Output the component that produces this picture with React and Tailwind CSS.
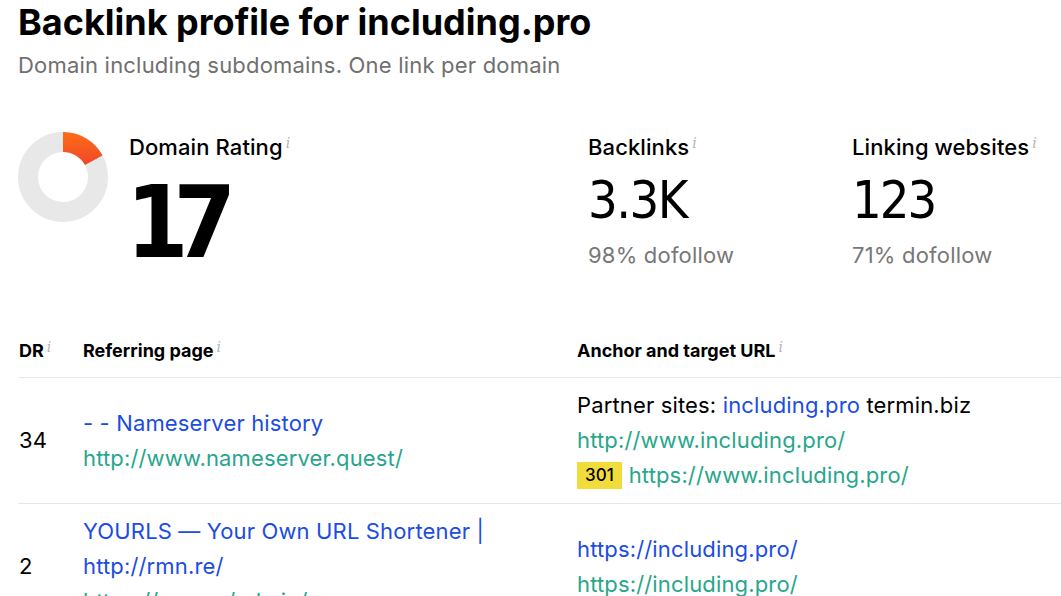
import React from "react";

function Info() {
  return (
    <span className="ml-[3px] text-[14px] italic font-normal text-[#b5b5b5] align-top relative -top-[4px]" style={{ fontFamily: "'DejaVu Serif', serif" }}>
      i
    </span>
  );
}

function Donut() {
  const r = 35;
  const c = 2 * Math.PI * r;
  const pct = 0.17;
  return (
    <svg width="90" height="90" viewBox="0 0 90 90" className="shrink-0">
      <defs>
        <linearGradient id="drg" gradientUnits="userSpaceOnUse" x1="45" y1="0" x2="86" y2="0">
          <stop offset="0%" stopColor="#ef3535" />
          <stop offset="100%" stopColor="#fb6a17" />
        </linearGradient>
      </defs>
      <circle cx="45" cy="45" r={r} fill="none" stroke="#e8e8e8" strokeWidth="20" />
      <circle
        cx="45"
        cy="45"
        r={r}
        fill="none"
        stroke="url(#drg)"
        strokeWidth="20"
        strokeDasharray={`${c * pct} ${c}`}
        transform="rotate(-90 45 45)"
      />
    </svg>
  );
}

export default function App() {
  return (
    <div className="bg-white w-[1061px] h-[596px] overflow-hidden text-black" style={{ fontFamily: "Inter, 'Noto Sans', sans-serif" }}>
      <div className="pl-[18px]">
        <h1 className="text-[36px] leading-[44px] font-bold">Backlink profile for including.pro</h1>
        <p className="mt-[7px] text-[22px] leading-[28px] text-[#707070] tracking-[0.2px]">Domain including subdomains. One link per domain</p>

        <div className="mt-[53px] flex items-start">
          <div className="flex w-[570px]">
            <Donut />
            <div className="ml-[21px] mt-[2px]">
              <div className="text-[22px] leading-[26px] font-medium tracking-[0.1px]">
                Domain Rating<Info />
              </div>
              <div className="mt-[13px] -ml-[3px] text-[100px] leading-[100px] font-bold tracking-[-15px]" style={{ fontFamily: "'DejaVu Sans Condensed', 'DejaVu Sans', sans-serif" }}>
                17
              </div>
            </div>
          </div>
          <div className="w-[264px] mt-[2px]">
            <div className="text-[22px] leading-[26px] font-medium tracking-[0.1px]">
              Backlinks<Info />
            </div>
            <div className="mt-[10px] text-[52px] leading-[60px] tracking-[-1.5px]" style={{ fontFamily: "'DejaVu Sans Condensed', 'DejaVu Sans', sans-serif" }}>
              3.3K
            </div>
            <div className="mt-[12px] text-[22px] leading-[26px] text-[#777] tracking-[0.2px]">98% dofollow</div>
          </div>
          <div className="mt-[2px]">
            <div className="text-[22px] leading-[26px] font-medium tracking-[0.1px]">
              Linking websites<Info />
            </div>
            <div className="mt-[10px] text-[52px] leading-[60px] tracking-[-2px]" style={{ fontFamily: "'DejaVu Sans Condensed', 'DejaVu Sans', sans-serif" }}>
              123
            </div>
            <div className="mt-[12px] text-[22px] leading-[26px] text-[#777] tracking-[0.2px]">71% dofollow</div>
          </div>
        </div>

        <div className="mt-[68px] w-[1100px]">
          <div className="grid grid-cols-[65px_494px_1fr] text-[18px] font-bold leading-[20px] pb-[16px] border-b border-[#e6e6e6]">
            <div className="pl-[1px]">DR<Info /></div>
            <div>Referring page<Info /></div>
            <div>Anchor and target URL<Info /></div>
          </div>

          <div className="grid grid-cols-[65px_494px_1fr] items-center py-[10px] border-b border-[#e6e6e6] text-[22px] leading-[35px] tracking-[0.15px]">
            <div className="pl-[1px]">34</div>
            <div>
              <div className="text-[#1b4ce3]">- - Nameserver history</div>
              <div className="text-[#27a68c]">http://www.nameserver.quest/</div>
            </div>
            <div>
              <div>
                Partner sites: <span className="text-[#1b4ce3]">including.pro</span> termin.biz
              </div>
              <div className="text-[#27a68c]">http://www.including.pro/</div>
              <div className="flex items-center">
                <span className="bg-[#f2dc3c] text-[17px] leading-[27px] px-[8px] font-medium mr-[7px] tracking-[0px]">301</span>
                <span className="text-[#27a68c]">https://www.including.pro/</span>
              </div>
            </div>
          </div>

          <div className="grid grid-cols-[65px_494px_1fr] items-center py-[10px] border-b border-[#e6e6e6] text-[22px] leading-[35px] tracking-[0.15px]">
            <div className="pl-[1px]">2</div>
            <div>
              <div className="text-[#1b4ce3]">YOURLS — Your Own URL Shortener | http://rmn.re/</div>
              <div className="text-[#27a68c]">https://rmn.re/admin/</div>
            </div>
            <div>
              <div className="text-[#1b4ce3]">https://including.pro/</div>
              <div className="text-[#27a68c]">https://including.pro/</div>
            </div>
          </div>
        </div>
      </div>
    </div>
  );
}
